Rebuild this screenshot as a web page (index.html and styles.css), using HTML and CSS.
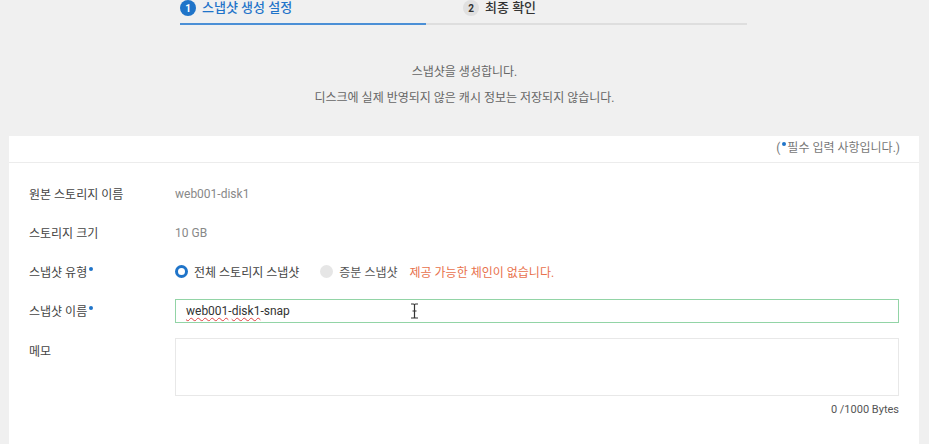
FILE: index.html
```html
<!DOCTYPE html>
<html lang="ko">
<head>
<meta charset="UTF-8">
<meta name="viewport" content="width=device-width, initial-scale=1">
<title>스냅샷 생성</title>
<link rel="stylesheet" href="styles.css">
</head>
<body>

<div class="stepper">
  <div class="steps">
    <div class="step active"><span class="num">1</span><span class="step-label">스냅샷 생성 설정</span></div>
    <div class="step"><span class="num">2</span><span class="step-label">최종 확인</span></div>
  </div>
  <div class="track"><div class="track-fill"></div></div>
</div>

<div class="intro">
  <p>스냅샷을 생성합니다.</p>
  <p>디스크에 실제 반영되지 않은 캐시 정보는 저장되지 않습니다.</p>
</div>

<div class="card">
  <div class="card-head">(<span class="req"></span>필수 입력 사항입니다.)</div>

  <div class="form">
    <div class="row">
      <div class="label">원본 스토리지 이름</div>
      <div class="value">web001-disk1</div>
    </div>
    <div class="row">
      <div class="label">스토리지 크기</div>
      <div class="value">10 GB</div>
    </div>
    <div class="row">
      <div class="label">스냅샷 유형<span class="req"></span></div>
      <div class="radios">
        <label class="radio checked"><span class="dot"></span>전체 스토리지 스냅샷</label>
        <label class="radio disabled"><span class="dot"></span>증분 스냅샷</label>
        <span class="err">제공 가능한 체인이 없습니다.</span>
      </div>
    </div>
    <div class="row">
      <div class="label">스냅샷 이름<span class="req"></span></div>
      <div class="input"><span class="typo">web001</span>-<span class="typo">disk1</span>-snap
        <svg class="ibeam" width="9" height="16" viewBox="0 0 9 16"><path d="M1 1h2.5c.6 0 1 .4 1 1v12c0 .6-.4 1-1 1H1M8 1H5.5c-.6 0-1 .4-1 1M8 15H5.5c-.6 0-1-.4-1-1M2.5 8h4" fill="none" stroke="#333" stroke-width="1.2"/></svg>
      </div>
    </div>
    <div class="row memo">
      <div class="label">메모</div>
      <div class="memo-box">
        <div class="textarea"></div>
        <div class="count">0 /1000 Bytes</div>
      </div>
    </div>
  </div>
</div>

</body>
</html>
```

FILE: styles.css
```css
body {
  margin: 0;
  background-color: #f0f0f0;
  font-family: Roboto, "Noto Sans CJK KR", sans-serif;
  font-size: 12px;
  color: #444;
}

/* stepper */
.stepper {
  width: 567px;
  margin-left: 180px;
}

.steps {
  display: flex;
  height: 23px;
}

.step {
  width: 283px;
  display: flex;
  align-items: flex-start;
  gap: 6px;
  font-size: 13px;
  font-weight: 500;
  color: #333;
}

.step .num {
  width: 16px;
  height: 16px;
  border-radius: 50%;
  background-color: #e0e0e0;
  color: #333;
  font-size: 10px;
  font-weight: 700;
  display: flex;
  align-items: center;
  justify-content: center;
}

.step-label {
  line-height: 16px;
}

.step.active {
  color: #1f74c9;
}

.step.active .num {
  background-color: #1f74c9;
  color: #fff;
}

.track {
  height: 2px;
  background-color: #dedede;
}

.track-fill {
  width: 246px;
  height: 2px;
  background-color: #4b8fd6;
}

/* intro text */
.intro {
  text-align: center;
  color: #666;
  padding-top: 39px;
  height: 111px;
  box-sizing: border-box;
}

.intro p {
  margin: 0 0 9px 0;
  line-height: 17px;
}

/* card */
.card {
  background-color: #fff;
  margin: 0 10px 0 9px;
  min-height: 320px;
}

.card-head {
  height: 27px;
  line-height: 25px;
  text-align: right;
  padding-right: 19px;
  color: #777;
  border-bottom: 1px solid #ececec;
  box-sizing: border-box;
}

.req {
  display: inline-block;
  width: 4px;
  height: 4px;
  border-radius: 50%;
  background-color: #1f74c9;
  vertical-align: 6px;
  margin: 0 1px 0 2px;
}

.form {
  padding: 11px 20px 0 20px;
}

.row {
  display: grid;
  grid-template-columns: 146px 1fr;
  align-items: center;
  min-height: 39px;
}

.label {
  color: #444;
}

.value {
  color: #888;
}

.radios {
  display: flex;
  align-items: center;
}

.radio {
  display: flex;
  align-items: center;
  gap: 6px;
  margin-right: 21px;
  color: #444;
}

.radio .dot {
  width: 13px;
  height: 13px;
  border-radius: 50%;
  box-sizing: border-box;
  background-color: #e6e6e6;
}

.radio.checked .dot {
  background-color: #fff;
  border: 3px solid #1f74c9;
}

.radio.disabled {
  color: #555;
  margin-right: 12px;
}

.err {
  color: #e8714c;
}

.input {
  position: relative;
  height: 24px;
  line-height: 22px;
  border: 1px solid #92d4a6;
  padding-left: 10px;
  color: #333;
  box-sizing: border-box;
}

.typo {
  text-decoration: underline wavy #e04040;
  text-decoration-thickness: 1px;
  text-underline-offset: 2px;
}

.ibeam {
  position: absolute;
  left: 234px;
  top: 3px;
}

.row.memo {
  align-items: start;
  padding-top: 8px;
}

.row.memo .label {
  padding-top: 4px;
}

.textarea {
  height: 58px;
  border: 1px solid #e8e8e8;
  box-sizing: border-box;
}

.count {
  text-align: right;
  font-size: 11px;
  color: #555;
  margin-top: 7px;
}
```
